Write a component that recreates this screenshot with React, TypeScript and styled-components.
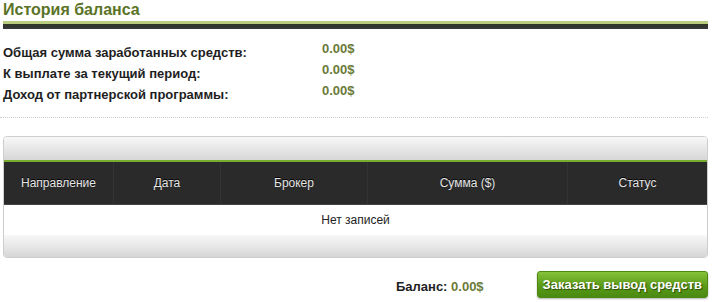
import { ReactElement } from "react";
import styled, { createGlobalStyle } from "styled-components";

const GlobalStyle = createGlobalStyle`
    body {
        margin: 0;
        background: #fff;
        font-family: "Liberation Sans", Arial, sans-serif;
    }
`;

const Page = styled.div`
    width: 714px;
    height: 302px;
    padding: 0 6px 0 3px;
    box-sizing: border-box;
    overflow: hidden;
`;

const Title = styled.h2`
    margin: 0;
    padding-top: 1px;
    font-size: 16px;
    line-height: 18px;
    font-weight: bold;
    color: #5b7327;
`;

const TitleBar = styled.div`
    margin-top: 2px;
    height: 8px;
    border-top: 3px solid #b9cc80;
    background: linear-gradient(#2e3a20, #333 40%, #3a3a3a);
    box-sizing: border-box;
`;

const Summary = styled.div`
    padding: 11px 0 14px;
    border-bottom: 1px dotted #cfcfcf;
    margin-left: -3px;
    padding-left: 3px;
`;

const SummaryRow = styled.div`
    display: grid;
    grid-template-columns: 319px auto;
    height: 21px;
    align-items: end;
`;

const Label = styled.span`
    font-size: 13px;
    font-weight: bold;
    color: #1e1e1e;
    line-height: 16px;
`;

const Amount = styled.span`
    font-size: 13px;
    font-weight: bold;
    color: #6a7a38;
    line-height: 16px;
    position: relative;
    top: -4px;
`;

const Table = styled.div`
    margin-top: 18px;
    border: 1px solid #cdcdcd;
    border-radius: 4px;
    overflow: hidden;
`;

const Shade = styled.div<{ $h: number }>`
    height: ${(p) => p.$h}px;
    background: linear-gradient(#f8f8f8, #d6d6d6);
`;

const HeadRow = styled.div`
    display: grid;
    grid-template-columns: 110px 107px 147px 200px 1fr;
    height: 42px;
    border-top: 2px solid #76ad2e;
    background: #2a2a2a;
    border-bottom: 1px solid #444;
`;

const HeadCell = styled.div`
    display: flex;
    align-items: center;
    justify-content: center;
    font-size: 12px;
    color: #e6e6e6;
    text-shadow: 0 -1px 0 #000;
    border-right: 1px solid #333;
    &:last-child {
        border-right: none;
    }
`;

const EmptyRow = styled.div`
    height: 30px;
    display: flex;
    align-items: center;
    justify-content: center;
    font-size: 12px;
    color: #222;
    background: #fff;
`;

const Footer = styled.div`
    display: flex;
    justify-content: flex-end;
    align-items: center;
    gap: 53px;
    margin-top: 13px;
`;

const Balance = styled.span`
    font-size: 13px;
    font-weight: bold;
    color: #1e1e1e;
    margin-top: 4px;
`;

const BalanceValue = styled.span`
    color: #6a7a38;
`;

const WithdrawButton = styled.button`
    height: 27px;
    padding: 0 5px;
    border: 1px solid #4d8a12;
    border-radius: 3px;
    background: linear-gradient(#86c23a, #5a9a18 55%, #4a8a10);
    color: #fff;
    font-family: "Liberation Sans", Arial, sans-serif;
    font-size: 13px;
    font-weight: bold;
    text-shadow: 1px 1px 1px #2a4a08;
    box-shadow: 0 1px 2px rgba(0, 0, 0, 0.3);
    cursor: pointer;
`;

const summary = [
  "Общая сумма заработанных средств:",
  "К выплате за текущий период:",
  "Доход от партнерской программы:",
];

const columns = ["Направление", "Дата", "Брокер", "Сумма ($)", "Статус"];

export const App = (): ReactElement => {
  return (
    <Page>
      <GlobalStyle />
      <Title>История баланса</Title>
      <TitleBar />
      <Summary>
        {summary.map((label) => (
          <SummaryRow key={label}>
            <Label>{label}</Label>
            <Amount>0.00$</Amount>
          </SummaryRow>
        ))}
      </Summary>
      <Table>
        <Shade $h={23} />
        <HeadRow>
          {columns.map((c) => (
            <HeadCell key={c}>{c}</HeadCell>
          ))}
        </HeadRow>
        <EmptyRow>Нет записей</EmptyRow>
        <Shade $h={22} />
      </Table>
      <Footer>
        <Balance>
          Баланс: <BalanceValue>0.00$</BalanceValue>
        </Balance>
        <WithdrawButton>Заказать вывод средств</WithdrawButton>
      </Footer>
    </Page>
  );
};

export default App;
